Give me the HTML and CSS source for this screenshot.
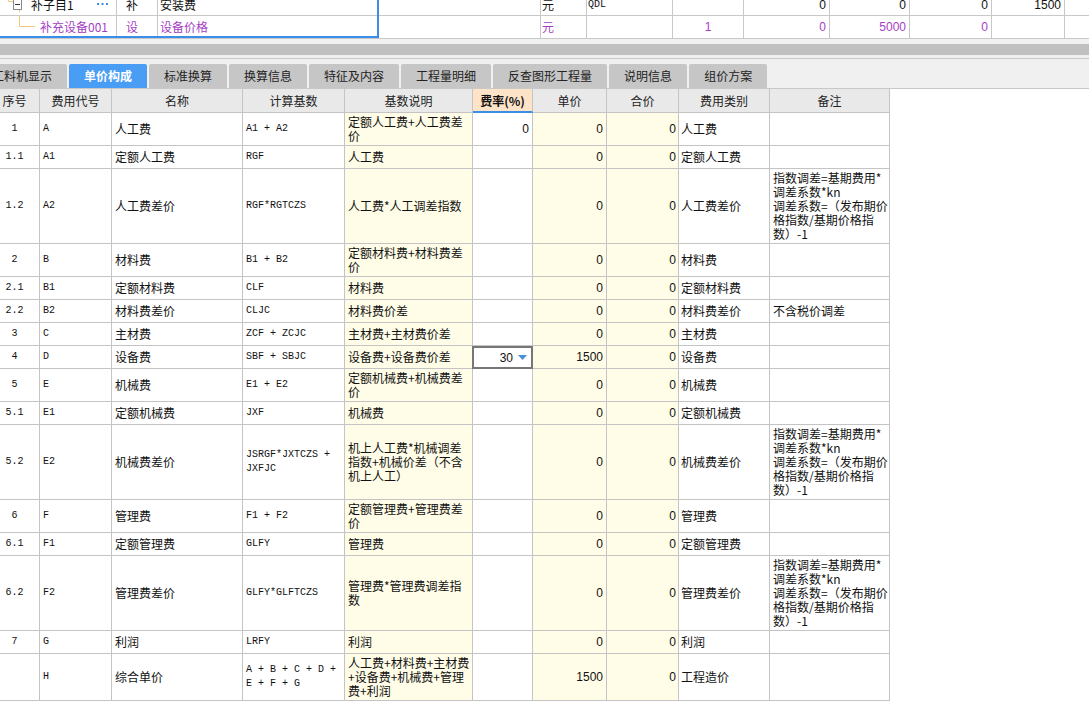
FILE: index.html
```html
<!DOCTYPE html>
<html lang="zh-CN">
<head>
<meta charset="utf-8">
<title>单价构成</title>
<link rel="stylesheet" href="styles.css">
</head>
<body>
<div class="top">
  <div class="trow r1">
    <div class="tc t1">
      <svg class="tree1" width="30" height="14" viewBox="0 0 30 14">
        <path d="M8.5 0 V3.5 H13" fill="none" stroke="#f5c77a"/>
        <path d="M19.5 12 V14" fill="none" stroke="#f5c77a"/>
        <rect x="13.5" y="1.5" width="8" height="10" fill="#fff" stroke="#8a8a8a"/>
        <path d="M15 6.5 H20" stroke="#333"/>
      </svg>
      <span class="lbl">补子目1</span>
      <svg class="dots" width="11" height="2" viewBox="0 0 11 2">
        <rect x="0" y="0" width="2" height="2" fill="#3a8ee6"/>
        <rect x="4.5" y="0" width="2" height="2" fill="#3a8ee6"/>
        <rect x="9" y="0" width="2" height="2" fill="#3a8ee6"/>
      </svg>
    </div>
    <div class="tc t2">补</div>
    <div class="tc t3">安装费</div>
    <div class="tc"></div>
    <div class="tc tu">元</div>
    <div class="tc tu mono">QDL</div>
    <div class="tc"></div>
    <div class="tc tr">0</div>
    <div class="tc tr">0</div>
    <div class="tc tr">0</div>
    <div class="tc tr">1500</div>
    <div class="tc last"></div>
  </div>
  <div class="trow r2">
    <div class="tc t1">
      <svg class="tree2" width="36" height="22" viewBox="0 0 36 22">
        <path d="M19.5 0 V10.5 H35" fill="none" stroke="#f5c77a"/>
      </svg>
      <span class="lbl">补充设备001</span>
    </div>
    <div class="tc t2">设</div>
    <div class="tc t3">设备价格</div>
    <div class="tc"></div>
    <div class="tc tu">元</div>
    <div class="tc"></div>
    <div class="tc tm">1</div>
    <div class="tc tr">0</div>
    <div class="tc tr">5000</div>
    <div class="tc tr">0</div>
    <div class="tc"></div>
    <div class="tc last"></div>
  </div>
  <div class="sel"></div>
</div>
<div class="sep"></div>
<div class="gap5"></div>
<div class="splitter"></div>
<div class="gap3"></div>

<div class="tabs">
  <div class="tab">工料机显示</div>
  <div class="tab active">单价构成</div>
  <div class="tab">标准换算</div>
  <div class="tab">换算信息</div>
  <div class="tab">特征及内容</div>
  <div class="tab">工程量明细</div>
  <div class="tab">反查图形工程量</div>
  <div class="tab">说明信息</div>
  <div class="tab">组价方案</div>
</div>

<div class="table">
  <div class="head">
    <div>序号</div><div>费用代号</div><div>名称</div><div>计算基数</div><div>基数说明</div><div class="rate">费率(%)</div><div>单价</div><div>合价</div><div>费用类别</div><div>备注</div>
  </div>
  <div class="body">
    <div>1</div><div>A</div><div>人工费</div><div>A1 + A2</div><div>定额人工费+人工费差<br>价</div><div>0</div><div>0</div><div>0</div><div>人工费</div><div></div>

    <div>1.1</div><div>A1</div><div>定额人工费</div><div>RGF</div><div>人工费</div><div></div><div>0</div><div>0</div><div>定额人工费</div><div></div>

    <div>1.2</div><div>A2</div><div>人工费差价</div><div>RGF*RGTCZS</div><div>人工费*人工调差指数</div><div></div><div>0</div><div>0</div><div>人工费差价</div><div>指数调差=基期费用*<br>调差系数*kn<br>调差系数=（发布期价<br>格指数/基期价格指<br>数）-1</div>

    <div>2</div><div>B</div><div>材料费</div><div>B1 + B2</div><div>定额材料费+材料费差<br>价</div><div></div><div>0</div><div>0</div><div>材料费</div><div></div>

    <div>2.1</div><div>B1</div><div>定额材料费</div><div>CLF</div><div>材料费</div><div></div><div>0</div><div>0</div><div>定额材料费</div><div></div>

    <div>2.2</div><div>B2</div><div>材料费差价</div><div>CLJC</div><div>材料费价差</div><div></div><div>0</div><div>0</div><div>材料费差价</div><div>不含税价调差</div>

    <div>3</div><div>C</div><div>主材费</div><div>ZCF + ZCJC</div><div>主材费+主材费价差</div><div></div><div>0</div><div>0</div><div>主材费</div><div></div>

    <div>4</div><div>D</div><div>设备费</div><div>SBF + SBJC</div><div>设备费+设备费价差</div><div class="ddcell"><div class="dd"><span>30</span><svg width="9" height="5" viewBox="0 0 9 5"><path d="M0 0 H9 L4.5 5 Z" fill="#4a90d9"/></svg></div></div><div>1500</div><div>0</div><div>设备费</div><div></div>

    <div>5</div><div>E</div><div>机械费</div><div>E1 + E2</div><div>定额机械费+机械费差<br>价</div><div></div><div>0</div><div>0</div><div>机械费</div><div></div>

    <div>5.1</div><div>E1</div><div>定额机械费</div><div>JXF</div><div>机械费</div><div></div><div>0</div><div>0</div><div>定额机械费</div><div></div>

    <div>5.2</div><div>E2</div><div>机械费差价</div><div>JSRGF*JXTCZS +<br>JXFJC</div><div>机上人工费*机械调差<br>指数+机械价差（不含<br>机上人工）</div><div></div><div>0</div><div>0</div><div>机械费差价</div><div>指数调差=基期费用*<br>调差系数*kn<br>调差系数=（发布期价<br>格指数/基期价格指<br>数）-1</div>

    <div>6</div><div>F</div><div>管理费</div><div>F1 + F2</div><div>定额管理费+管理费差<br>价</div><div></div><div>0</div><div>0</div><div>管理费</div><div></div>

    <div>6.1</div><div>F1</div><div>定额管理费</div><div>GLFY</div><div>管理费</div><div></div><div>0</div><div>0</div><div>定额管理费</div><div></div>

    <div>6.2</div><div>F2</div><div>管理费差价</div><div>GLFY*GLFTCZS</div><div>管理费*管理费调差指<br>数</div><div></div><div>0</div><div>0</div><div>管理费差价</div><div>指数调差=基期费用*<br>调差系数*kn<br>调差系数=（发布期价<br>格指数/基期价格指<br>数）-1</div>

    <div>7</div><div>G</div><div>利润</div><div>LRFY</div><div>利润</div><div></div><div>0</div><div>0</div><div>利润</div><div></div>

    <div></div><div>H</div><div>综合单价</div><div>A + B + C + D +<br>E + F + G</div><div>人工费+材料费+主材费<br>+设备费+机械费+管理<br>费+利润</div><div></div><div>1500</div><div>0</div><div>工程造价</div><div></div>
  </div>
</div>
</body>
</html>
```
FILE: styles.css
```css
html, body {
  margin: 0;
  padding: 0;
}
body {
  width: 1089px;
  height: 717px;
  overflow: hidden;
  background: #ffffff;
  font-family: "Noto Sans CJK SC", "Noto Sans", sans-serif;
  font-size: 12px;
  color: #111;
}

/* ---------- top grid ---------- */
.top {
  position: relative;
  height: 38px;
}
.trow {
  display: grid;
  grid-template-columns: 117px 41px 221px 162px 46px 86px 71px 86px 80px 82px 73px 1fr;
}
.tc {
  box-sizing: border-box;
  border-right: 1px solid #c8c8c8;
  display: flex;
  align-items: center;
  white-space: nowrap;
  overflow: hidden;
  line-height: 14px;
}
.trow.r1 .tc {
  height: 16px;
  border-bottom: 1px solid #c8c8c8;
  align-items: flex-end;
  padding-bottom: 3px;
}
.trow.r2 .tc {
  height: 22px;
}
.trow.r2 {
  color: #a53ec4;
}
.tc.t3 {
  border-right: none;
  padding-left: 2px;
}
.tc.t2 {
  padding-left: 9px;
}
.tc.tu {
  padding-left: 1px;
}
.tc.tr {
  justify-content: flex-end;
  padding-right: 3px;
  font-family: "Liberation Sans", sans-serif;
}
.tc.tm {
  justify-content: center;
  font-family: "Liberation Sans", sans-serif;
}
.tc.last {
  border-right: none;
}
.mono {
  font-family: "Liberation Mono", monospace;
  font-size: 10px;
}
.tree1 {
  flex: none;
  display: block;
  margin-right: 1px;
}
.tree2 {
  flex: none;
  display: block;
  align-self: stretch;
  margin-right: 4px;
}
.trow.r2 .tc.t1 {
  align-items: center;
}
.dots {
  flex: none;
  display: block;
  margin-left: auto;
  margin-right: 8px;
  margin-bottom: 7px;
}
.sel {
  position: absolute;
  left: -2px;
  top: -2px;
  width: 381px;
  height: 40px;
  box-sizing: border-box;
  border: 2px solid #3a8ee6;
  pointer-events: none;
}

/* ---------- splitter ---------- */
.sep {
  height: 1px;
  background: #c8c8c8;
}
.gap5 {
  height: 5px;
  background: #f0f0f0;
}
.splitter {
  height: 11px;
  background: #c0c0c0;
}
.gap3 {
  height: 3px;
  background: #f0f0f0;
}

/* ---------- tabs ---------- */
.tabs {
  display: flex;
  align-items: flex-end;
  gap: 2px;
  height: 29px;
  border-top: 1px solid #c8c8c8;
  border-bottom: 1px solid #c8c8c8;
  background: #f0f0f0;
  padding-left: 0;
  overflow: hidden;
}
.tab {
  flex: none;
  height: 24px;
  line-height: 24px;
  padding: 0 15px;
  background: #c6c6c6;
  border-radius: 2px 2px 0 0;
  color: #222;
  white-space: nowrap;
}
.tab:first-child {
  margin-left: -23px;
}
.tab.active {
  background: #4a9df5;
  color: #fff;
  font-weight: bold;
}

/* ---------- main table ---------- */
.table {
  margin-left: -10px;
  width: 900px;
}
.head, .body {
  display: grid;
  grid-template-columns: 50px 72px 131px 102px 128px 60px 74px 72px 91px 120px;
}
.head > div {
  box-sizing: border-box;
  height: 24px;
  background: #e9e9e9;
  border-right: 1px solid #c4c4c4;
  border-bottom: 1px solid #c4c4c4;
  display: flex;
  align-items: center;
  justify-content: center;
  color: #222;
  white-space: nowrap;
}
.head > div.rate {
  background: #fde4c8;
  border-bottom: 2px solid #3a8ee6;
  font-weight: bold;
  color: #111;
}
.body > div {
  box-sizing: border-box;
  min-height: 23px;
  padding: 2px 3px;
  line-height: 14px;
  border-right: 1px solid #c4c4c4;
  border-bottom: 1px solid #c4c4c4;
  display: flex;
  align-items: center;
  white-space: nowrap;
  color: #111;
}
.body > div:nth-child(10n+1) {
  justify-content: center;
  font-family: "Liberation Mono", monospace;
  font-size: 10px;
}
.body > div:nth-child(10n+2),
.body > div:nth-child(10n+4) {
  font-family: "Liberation Mono", monospace;
  font-size: 10px;
}
.body > div:nth-child(10n+5) {
  background: #fffde8;
}
.body > div:nth-child(10n+6) {
  justify-content: flex-end;
  font-family: "Liberation Sans", sans-serif;
}
.body > div:nth-child(10n+7),
.body > div:nth-child(10n+8) {
  background: #fffde8;
  justify-content: flex-end;
  font-family: "Liberation Sans", sans-serif;
}
.body > div:nth-child(10n+8) {
  padding-right: 2px;
}
.body > div:nth-child(10n+9) {
  padding-left: 2px;
}
.body > div.ddcell {
  position: relative;
  padding: 0;
}
.dd {
  position: absolute;
  left: -1px;
  top: 0;
  width: 61px;
  height: 23px;
  box-sizing: border-box;
  border: 2px solid #777;
  background: #fff;
  display: flex;
  align-items: center;
  justify-content: flex-end;
  gap: 5px;
  padding-right: 4px;
  font-family: "Liberation Sans", sans-serif;
  font-size: 12px;
}
.dd svg {
  display: block;
}
```
